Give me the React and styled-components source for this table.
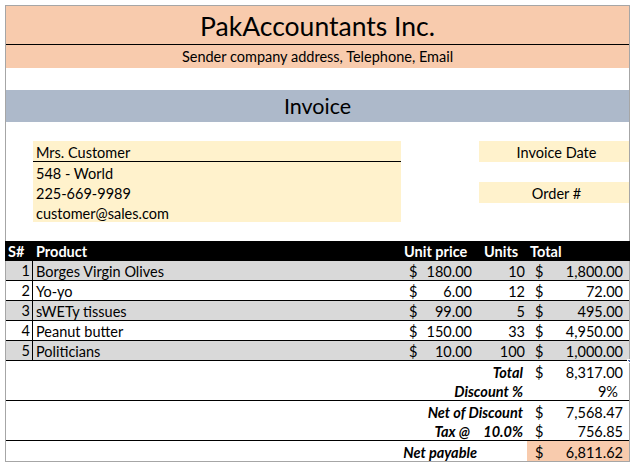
import React from "react";
import styled, { createGlobalStyle } from "styled-components";

const GlobalStyle = createGlobalStyle`
  html, body { margin: 0; padding: 0; background: #fff; }
  body { font-family: Lato, "Liberation Sans", sans-serif; color: #000; }
  * { box-sizing: border-box; }
`;

const COLS = "27px 368px 78px 48px 102px";
const PEACH = "#f8cbad";

const Page = styled.div`
  padding: 5px 0 0 5px;
`;

const Sheet = styled.div`
  width: 625px;
  border: 1px solid #a6a6a6;
  display: flex;
  flex-direction: column;
`;

const Title = styled.div`
  height: 39px;
  background: ${PEACH};
  border-bottom: 1px solid #000;
  display: flex;
  align-items: flex-end;
  justify-content: center;
  font-size: 26.5px;
  line-height: 32px;
  padding-bottom: 2px;
`;

const Subtitle = styled.div`
  height: 23px;
  background: ${PEACH};
  display: flex;
  align-items: center;
  justify-content: center;
  font-size: 14.5px;
`;

const Spacer = styled.div`
  height: ${(p) => p.$h}px;
`;

const Band = styled.div`
  height: 32px;
  background: #adb9ca;
  display: flex;
  align-items: center;
  justify-content: center;
  font-size: 21.5px;
`;

const InfoGrid = styled.div`
  display: grid;
  grid-template-columns: ${COLS};
  grid-template-rows: 21px 20px 20px 20px;
  font-size: 14.5px;
`;

const CustLine = styled.div`
  grid-column: 2;
  grid-row: ${(p) => p.$row};
  background: #fff2cc;
  padding: 2px 0 0 3px;
  display: flex;
  align-items: center;
  border-bottom: ${(p) => (p.$rule ? "1px solid #000" : "none")};
`;

const MetaBox = styled.div`
  grid-column: 4 / 6;
  grid-row: ${(p) => p.$row};
  background: #fff2cc;
  display: flex;
  align-items: center;
  justify-content: center;
  height: 21px;
  padding: 1px 0 0 5px;
`;

const Table = styled.div`
  display: flex;
  flex-direction: column;
  font-size: 14.5px;
`;

const HeadRow = styled.div`
  display: grid;
  grid-template-columns: ${COLS};
  height: 20px;
  margin: 0 -1px;
  padding: 1px 1px 0;
  background: #000;
  color: #fff;
  font-weight: 700;
`;

const HeadCell = styled.div`
  display: flex;
  align-items: center;
  padding-left: ${(p) => p.$pl ?? 3}px;
`;

const Row = styled.div`
  position: relative;
  display: grid;
  grid-template-columns: ${COLS};
  height: 20px;
  padding-top: 2px;
  background: ${(p) => (p.$alt ? "#d9d9d9" : "#fff")};
  border-bottom: ${(p) => (p.$rule ? "1px solid #000" : "none")};
`;

const FillHandle = styled.span`
  position: absolute;
  right: -2px;
  bottom: -3px;
  width: 4px;
  height: 4px;
  background: #4a66ac;
  border: 1px solid #fff;
`;

const NumCell = styled.div`
  display: flex;
  align-items: center;
  justify-content: flex-end;
  padding-right: 2px;
  margin-top: -2px;
  border-right: 1px solid #000;
`;

const TextCell = styled.div`
  display: flex;
  align-items: center;
  padding-left: 3px;
`;

const MoneyCell = styled.div`
  display: flex;
  align-items: center;
  justify-content: space-between;
  padding: 0 ${(p) => p.$pr ?? 7}px 0 8px;
  background: ${(p) => p.$bg || "transparent"};
`;

const FillMoneyCell = styled(MoneyCell)`
  margin-top: -2px;
  padding-top: 2px;
`;

const RightCell = styled.div`
  display: flex;
  align-items: center;
  justify-content: flex-end;
  padding-right: ${(p) => p.$pr ?? 2}px;
  grid-column: ${(p) => p.$span || "auto"};
`;

const Label = styled(RightCell)`
  font-weight: 700;
  font-style: italic;
`;

const items = [
  ["Borges Virgin Olives", "180.00", 10, "1,800.00"],
  ["Yo-yo", "6.00", 12, "72.00"],
  ["sWETy tissues", "99.00", 5, "495.00"],
  ["Peanut butter", "150.00", 33, "4,950.00"],
  ["Politicians", "10.00", 100, "1,000.00"],
];

export default function App() {
  return (
    <Page>
      <GlobalStyle />
      <Sheet>
        <Title>PakAccountants Inc.</Title>
        <Subtitle>Sender company address, Telephone, Email</Subtitle>
        <Spacer $h={22} />
        <Band>Invoice</Band>
        <Spacer $h={19} />
        <InfoGrid>
          <CustLine $row={1} $rule>Mrs. Customer</CustLine>
          <CustLine $row={2}>548 - World</CustLine>
          <CustLine $row={3}>225-669-9989</CustLine>
          <CustLine $row={4}>customer@sales.com</CustLine>
          <MetaBox $row={1}>Invoice Date</MetaBox>
          <MetaBox $row={3}>Order #</MetaBox>
        </InfoGrid>
        <Spacer $h={19} />
        <Table>
          <HeadRow>
            <HeadCell $pl={2}>S#</HeadCell>
            <HeadCell>Product</HeadCell>
            <HeadCell>Unit price</HeadCell>
            <HeadCell $pl={5}>Units</HeadCell>
            <HeadCell>Total</HeadCell>
          </HeadRow>
          {items.map(([name, price, units, total], i) => (
            <Row key={name} $alt={i % 2 === 0} $rule>
              <NumCell>{i + 1}</NumCell>
              <TextCell>{name}</TextCell>
              <MoneyCell>
                <span>$</span>
                <span>{price}</span>
              </MoneyCell>
              <RightCell>{units}</RightCell>
              <MoneyCell $pr={6}>
                <span>$</span>
                <span>{total}</span>
              </MoneyCell>
              {i === items.length - 1 && <FillHandle />}
            </Row>
          ))}
          <Row>
            <Label $span="1 / 5" $pr={4}>Total</Label>
            <MoneyCell $pr={6}>
              <span>$</span>
              <span>8,317.00</span>
            </MoneyCell>
          </Row>
          <Row $rule>
            <Label $span="1 / 5" $pr={4}>Discount %</Label>
            <RightCell $pr={11}>9%</RightCell>
          </Row>
          <Row>
            <Label $span="1 / 5" $pr={4}>Net of Discount</Label>
            <MoneyCell $pr={6}>
              <span>$</span>
              <span>7,568.47</span>
            </MoneyCell>
          </Row>
          <Row $rule>
            <Label $span="1 / 4" $pr={9}>Tax @</Label>
            <Label $pr={4}>10.0%</Label>
            <MoneyCell $pr={6}>
              <span>$</span>
              <span>756.85</span>
            </MoneyCell>
          </Row>
          <Row>
            <Label $span="1 / 4">Net payable</Label>
            <RightCell />
            <FillMoneyCell $pr={6} $bg={PEACH}>
              <span>$</span>
              <span>6,811.62</span>
            </FillMoneyCell>
          </Row>
        </Table>
      </Sheet>
    </Page>
  );
}
